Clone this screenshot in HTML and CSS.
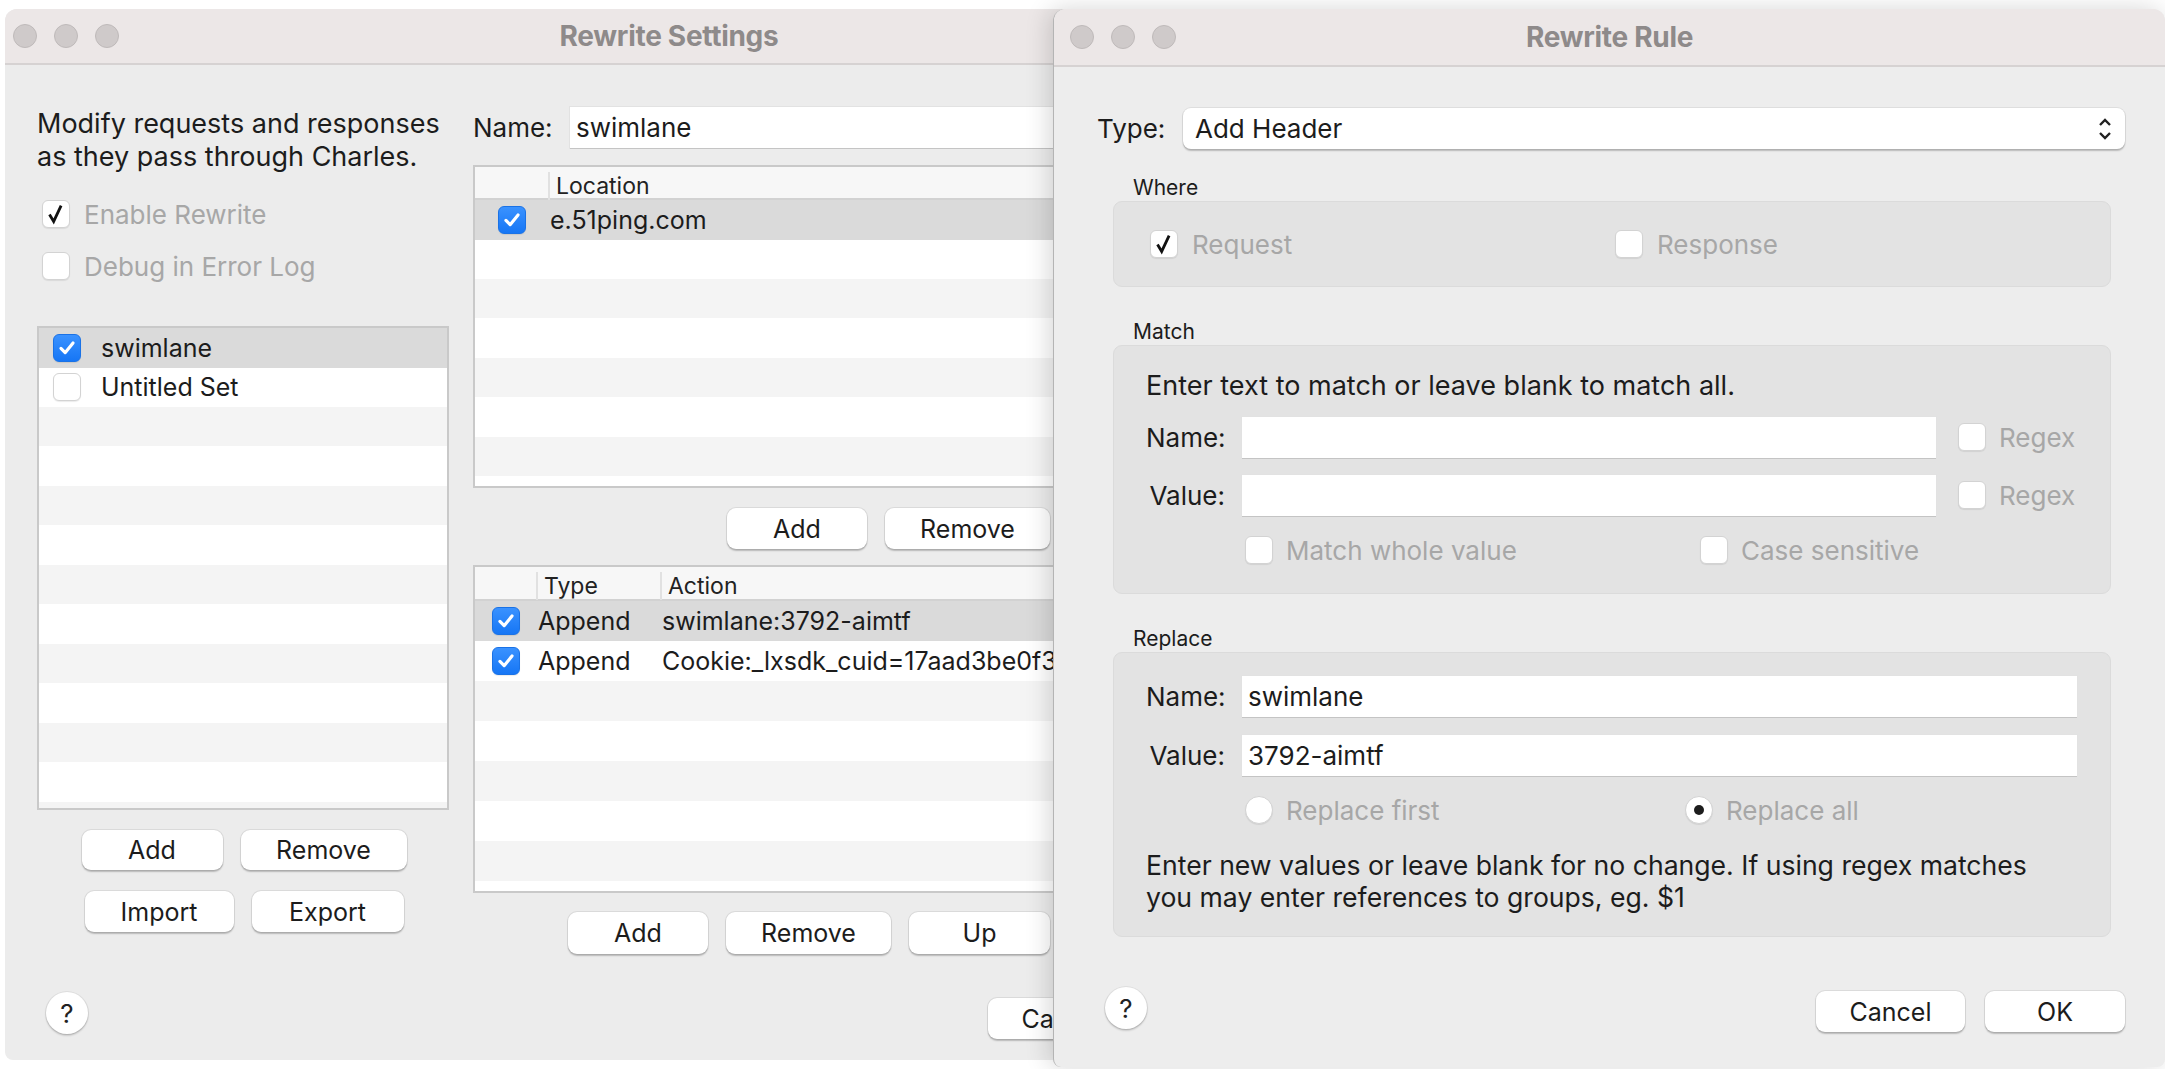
FILE: index.html
```html
<!DOCTYPE html>
<html>
<head>
<meta charset="utf-8">
<title>Rewrite Settings</title>
<link rel="stylesheet" href="styles.css">
</head>
<body>
<section class="win win-settings">
  <header class="titlebar">
    <div class="lights"><span></span><span></span><span></span></div>
    <div class="title">Rewrite Settings</div>
    <div></div>
  </header>
  <div class="settings-body">
    <div class="col-left">
      <p class="intro">Modify requests and responses<br>as they pass through Charles.</p>
      <div class="chk-row dis first"><span class="cb"><svg viewBox="0 0 28 28"><path class="tick-dark" d="M7 14.5 L11.5 22 L19.5 5"/></svg></span>Enable Rewrite</div>
      <div class="chk-row dis second"><span class="cb"></span>Debug in Error Log</div>
      <div class="list sets">
        <div class="row sel"><span class="cb blue"><svg viewBox="0 0 28 28"><path class="tick-white" d="M7.5 14.5 L12 19 L20.5 8.5"/></svg></span><span>swimlane</span></div>
        <div class="row plain"><span class="cb"></span><span>Untitled Set</span></div>
      </div>
      <div class="btn-row center r1"><button class="btn w-add">Add</button><button class="btn w-remove">Remove</button></div>
      <div class="btn-row center r2"><button class="btn w-import">Import</button><button class="btn w-export">Export</button></div>
    </div>
    <div class="col-main">
      <div class="name-row"><span class="lbl">Name:</span><div class="field">swimlane</div></div>
      <div class="table loc">
        <div class="thead"><span class="th"></span><span class="th sep">Location</span></div>
        <div class="tbody">
          <div class="trow sel"><span class="td cbcell"><span class="cb blue"><svg viewBox="0 0 28 28"><path class="tick-white" d="M7.5 14.5 L12 19 L20.5 8.5"/></svg></span></span><span class="td">e.51ping.com</span></div>
        </div>
      </div>
      <div class="btn-row right r3"><button class="btn w-add2">Add</button><button class="btn w-remove2">Remove</button></div>
      <div class="table act">
        <div class="thead"><span class="th"></span><span class="th sep">Type</span><span class="th sep">Action</span></div>
        <div class="tbody">
          <div class="trow sel"><span class="td cbcell"><span class="cb blue"><svg viewBox="0 0 28 28"><path class="tick-white" d="M7.5 14.5 L12 19 L20.5 8.5"/></svg></span></span><span class="td">Append</span><span class="td">swimlane:3792-aimtf</span></div>
          <div class="trow plain"><span class="td cbcell"><span class="cb blue"><svg viewBox="0 0 28 28"><path class="tick-white" d="M7.5 14.5 L12 19 L20.5 8.5"/></svg></span></span><span class="td">Append</span><span class="td">Cookie:_lxsdk_cuid=17aad3be0f3</span></div>
        </div>
      </div>
      <div class="btn-row right r4"><button class="btn w-add3">Add</button><button class="btn w-remove3">Remove</button><button class="btn w-up">Up</button></div>
    </div>
  </div>
  <footer class="foot foot-settings">
    <button class="help">?</button>
    <div class="foot-btns"><button class="btn w-cancel">Cancel</button><button class="btn w-ok">OK</button></div>
  </footer>
</section>

<section class="win win-rule">
  <header class="titlebar">
    <div class="lights"><span></span><span></span><span></span></div>
    <div class="title">Rewrite Rule</div>
    <div></div>
  </header>
  <div class="rule-body">
    <div class="type-row">
      <span class="lbl">Type:</span>
      <div class="select">
        <span>Add Header</span>
        <svg class="chev" viewBox="0 0 16 26"><path d="M3 9 L8 4 L13 9 M3 17 L8 22 L13 17"/></svg>
      </div>
    </div>

    <div class="group-label">Where</div>
    <div class="group where">
      <div class="opt w-req"><span class="cb"><svg viewBox="0 0 28 28"><path class="tick-dark" d="M7 14.5 L11.5 22 L19.5 5"/></svg></span><span class="dis-text">Request</span></div>
      <div class="opt"><span class="cb"></span><span class="dis-text">Response</span></div>
    </div>

    <div class="group-label gap">Match</div>
    <div class="group match">
      <p class="hint">Enter text to match or leave blank to match all.</p>
      <div class="frow first"><span class="flbl">Name:</span><div class="field short"></div><span class="cb"></span><span class="dis-text">Regex</span></div>
      <div class="frow"><span class="flbl">Value:</span><div class="field short"></div><span class="cb"></span><span class="dis-text">Regex</span></div>
      <div class="opts">
        <div class="opt w-mwv"><span class="cb"></span><span class="dis-text">Match whole value</span></div>
        <div class="opt"><span class="cb"></span><span class="dis-text">Case sensitive</span></div>
      </div>
    </div>

    <div class="group-label gap">Replace</div>
    <div class="group replace">
      <div class="frow first"><span class="flbl">Name:</span><div class="field long">swimlane</div></div>
      <div class="frow"><span class="flbl">Value:</span><div class="field long">3792-aimtf</div></div>
      <div class="opts radios">
        <div class="opt w-rf"><span class="radio"></span><span class="dis-text">Replace first</span></div>
        <div class="opt"><span class="radio on"></span><span class="dis-text">Replace all</span></div>
      </div>
      <p class="note">Enter new values or leave blank for no change. If using regex matches<br>you may enter references to groups, eg. $1</p>
    </div>
  </div>
  <footer class="foot foot-rule">
    <button class="help">?</button>
    <div class="foot-btns"><button class="btn w-cancel">Cancel</button><button class="btn w-ok">OK</button></div>
  </footer>
</section>
</body>
</html>
```

FILE: styles.css
```css
* { box-sizing: border-box; }
html, body { margin: 0; padding: 0; }
body {
  width: 2165px;
  height: 1069px;
  overflow: hidden;
  position: relative;
  background: #ffffff;
  font-family: Inter, "Noto Sans", "Liberation Sans", sans-serif;
  font-size: 25px;
  color: #1c1c1c;
}
button { font-family: inherit; font-size: inherit; color: inherit; }

/* windows on the desktop */
.win {
  position: absolute;
  background: #ececec;
  display: flex;
  flex-direction: column;
  border-radius: 12px 12px 8px 8px;
}
.win-settings { left: 5px; top: 9px; width: 1328px; height: 1051px; }
.win-rule {
  left: 1053px; top: 9px; width: 1112px; height: 1058px;
  border-left: 1px solid #b4b4b4;
  box-shadow: -4px 0 24px rgba(0,0,0,0.16);
  background: #ededed;
}

.titlebar {
  flex: none;
  height: 56px;
  display: grid;
  grid-template-columns: 1fr auto 1fr;
  align-items: center;
  background: #ece7e7;
  border-bottom: 2px solid #d6d2d2;
  border-radius: 12px 12px 0 0;
}
.win-rule .titlebar { height: 58px; }
.lights { display: flex; gap: 17px; padding-left: 8px; }
.win-rule .lights { padding-left: 16px; }
.lights span {
  width: 24px; height: 24px; border-radius: 50%;
  background: #cfcaca; border: 1px solid #bfbaba;
}
.title { font-weight: 700; font-size: 28px; color: #8e8a8a; letter-spacing: -0.3px; }

/* checkbox */
.cb {
  flex: none;
  width: 28px; height: 28px;
  border-radius: 6px;
  background: #ffffff;
  border: 1px solid #d3d3d3;
  box-shadow: 0 1px 1px rgba(0,0,0,0.08);
  display: inline-flex;
}
.cb svg { width: 100%; height: 100%; }
.tick-dark { fill: none; stroke: #111; stroke-width: 3; stroke-linejoin: miter; }
.cb.blue {
  background: linear-gradient(#3a92ff, #1676f5);
  border: 1px solid #1a72e6;
}
.tick-white { fill: none; stroke: #fff; stroke-width: 3.4; stroke-linecap: round; stroke-linejoin: round; }

.radio {
  flex: none;
  width: 28px; height: 28px; border-radius: 50%;
  background: #fff; border: 1px solid #d3d3d3;
  box-shadow: 0 1px 1px rgba(0,0,0,0.08);
  display: inline-flex; align-items: center; justify-content: center;
}
.radio.on::after { content: ""; width: 10px; height: 10px; border-radius: 50%; background: #1d1d1d; }

.dis-text, .dis { color: #a7a7a7; }

/* buttons */
.btn {
  height: 41px;
  border: none;
  background: #ffffff;
  border-radius: 9px;
  box-shadow: 0 0 0 1px rgba(0,0,0,0.07), 0 1.5px 1.5px rgba(0,0,0,0.22);
  padding: 0;
  text-align: center;
  color: #1c1c1c;
}
.btn-row { display: flex; gap: 18px; }

/* settings window body */
.settings-body { flex: 1; display: flex; gap: 24px; padding: 42px 0 0 32px; }
.col-left { width: 412px; flex: none; display: flex; flex-direction: column; }
.intro { margin: 0; font-size: 27px; line-height: 33px; white-space: nowrap; }
.chk-row { display: flex; align-items: center; gap: 14px; height: 40px; padding-left: 5px; font-size: 26px; }
.chk-row.first { margin-top: 21px; }
.chk-row.second { margin-top: 12px; }

.list {
  margin-top: 40px;
  height: 484px;
  border: 2px solid #c9c9c9;
  background: repeating-linear-gradient(to bottom, #f4f4f4 0 39.5px, #ffffff 39.5px 79px);
}
.list .row { height: 39.5px; display: flex; align-items: center; gap: 20px; padding-left: 14px; }
.row.sel, .trow.sel { background: #dadada; }
.row.plain, .trow.plain { background: #ffffff; }

.btn-row.center { justify-content: center; padding-left: 2px; }
.btn-row.r1 { margin-top: 20px; }
.btn-row.r1 .btn { height: 40px; }
.btn-row.r2 { margin-top: 21px; }
.w-add { width: 141px; }
.w-remove { width: 166px; }
.w-import { width: 149px; }
.w-export { width: 152px; }

.col-main { width: 640px; flex: none; display: flex; flex-direction: column; }
.name-row { display: flex; align-items: center; height: 41px; gap: 18px; }
.lbl { width: 79px; flex: none; font-size: 26px; }
.field {
  height: 41px;
  background: #ffffff;
  box-shadow: 0 1px 0 #c4c4c4, 0 0 0 1px #e2e2e2;
  display: flex; align-items: center;
  padding-left: 6px;
  font-size: 26px;
}
.name-row .field { flex: 1; }

.table { border: 2px solid #c9c9c9; background: #fff; display: flex; flex-direction: column; }
.table.loc { margin-top: 17px; height: 323px; }
.table.act { margin-top: 16px; height: 328px; }
.thead { flex: none; display: grid; background: #f7f7f7; border-bottom: 2px solid #d2d2d2; font-size: 23px; color: #222; }
.loc .thead { height: 33px; }
.act .thead { height: 34px; }
.loc .thead, .loc .trow { grid-template-columns: 73px 1fr; }
.act .thead, .act .trow { grid-template-columns: 61px 124px 1fr; }
.th { display: flex; align-items: center; white-space: nowrap; }
.th.sep { border-left: 2px solid #e1e1e1; padding-left: 6px; margin: 5px 0; }
.tbody { flex: 1; overflow: hidden; }
.loc .tbody { background: repeating-linear-gradient(to bottom, #f4f4f4 0 39.5px, #ffffff 39.5px 79px); }
.act .tbody { background: repeating-linear-gradient(to bottom, #f4f4f4 0 40px, #ffffff 40px 80px); }
.trow { display: grid; align-items: center; }
.loc .trow { height: 40px; }
.act .trow { height: 40px; }
.td { white-space: nowrap; padding-left: 2px; font-size: 25px; }
.td.cbcell { display: flex; justify-content: center; padding-left: 0; }

.btn-row.right { justify-content: flex-end; padding-right: 63px; }
.btn-row.r3 { margin-top: 20px; }
.btn-row.r3 .btn { height: 41px; }
.btn-row.r4 { margin-top: 19px; }
.btn-row.r4 .btn { height: 42px; }
.w-add2 { width: 140px; }
.w-remove2 { width: 165px; }
.w-add3 { width: 140px; }
.w-remove3 { width: 165px; }
.w-up { width: 141px; }

/* footers */
.foot { flex: none; display: flex; align-items: flex-start; }
.help {
  width: 42px; height: 42px; border-radius: 50%;
  border: none; background: #fff;
  box-shadow: 0 0 0 1px rgba(0,0,0,0.06), 0 1.5px 2px rgba(0,0,0,0.22);
  font-size: 26px; padding: 0; color: #222;
}
.foot-btns { display: flex; gap: 20px; }
.foot-btns .btn { height: 41px; }
.w-cancel { width: 149px; }
.w-ok { width: 140px; }
.foot-settings { padding: 0 0 21px 41px; }
.foot-settings .foot-btns { margin: 6px 0 0 900px; }
.foot-rule { padding: 0 40px 35px 51px; }
.foot-rule .foot-btns { margin: 4px 0 0 auto; }

/* rule window body */
.rule-body { flex: 1; display: flex; flex-direction: column; padding: 41px 40px 0 43px; }
.type-row { display: flex; align-items: center; height: 41px; }
.type-row .lbl { width: 86px; }
.select {
  flex: 1; height: 41px;
  background: #fff; border-radius: 8px;
  box-shadow: 0 0 0 1px rgba(0,0,0,0.06), 0 1.5px 1.5px rgba(0,0,0,0.22);
  display: flex; align-items: center; justify-content: space-between;
  padding: 0 12px 0 12px;
  font-size: 26px;
}
.chev { width: 16px; height: 26px; }
.chev path { fill: none; stroke: #222; stroke-width: 2.4; }

.group-label { margin: 26px 0 0 36px; height: 26px; line-height: 26px; font-size: 21px; color: #1c1c1c; }
.group-label.gap { margin-top: 32px; }
.group {
  margin: 0 14px 0 16px;
  background: #e3e3e3;
  border: 1.5px solid #dbdbdb;
  border-radius: 9px;
}
.where { height: 86px; display: flex; align-items: center; padding-left: 36px; }
.opt { display: flex; align-items: center; gap: 13px; font-size: 26px; }
.where .opt { gap: 14px; }
.w-req { width: 465px; }

.match { height: 249px; padding: 27px 0 0 32px; }
.hint { margin: 0; height: 26px; line-height: 26px; font-size: 27px; white-space: nowrap; }
.frow { display: flex; align-items: center; height: 40px; margin-top: 18px; font-size: 26px; }
.flbl { width: 79px; flex: none; text-align: right; margin-right: 17px; }
.field.short { width: 694px; margin-right: 22px; }
.frow .cb { margin-right: 13px; }
.opts { display: flex; padding-left: 99px; margin-top: 21px; height: 28px; }
.w-mwv { width: 455px; }

.replace { height: 285px; padding: 23px 0 0 32px; }
.replace .frow { height: 41px; }
.replace .frow.first { margin-top: 0; }
.field.long { width: 835px; }
.radios { margin-top: 20px; }
.w-rf { width: 440px; }
.note { margin: 25px 0 0 0; font-size: 26.6px; line-height: 32px; white-space: nowrap; }
```
